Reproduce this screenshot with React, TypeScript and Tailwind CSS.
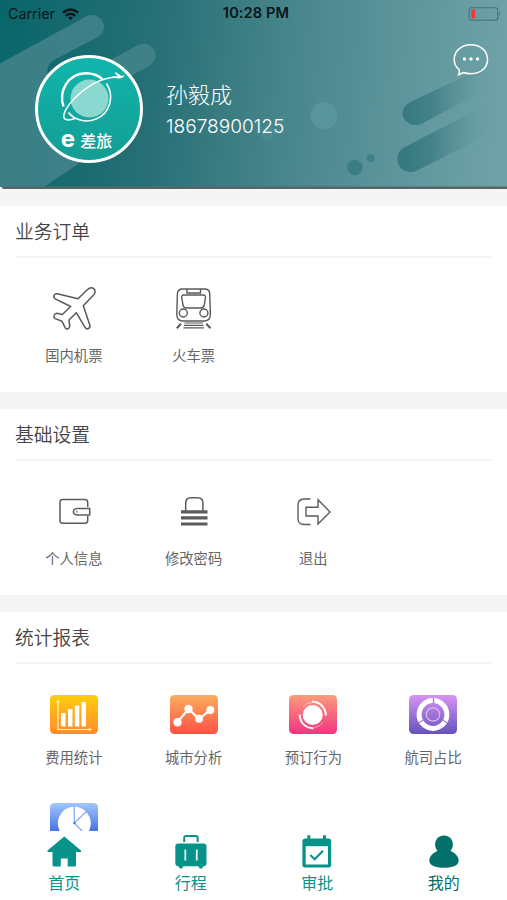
import type { ReactNode } from 'react'

type MenuItem = {
  label: string
  icon: ReactNode
}

type MenuSectionProps = {
  title: string
  items: MenuItem[]
  compact?: boolean
}

function PlaneIcon() {
  return (
    <svg width="48" height="48" viewBox="0 0 48 48" fill="none" stroke="#595959" strokeWidth="1.5" strokeLinejoin="round">
      <path d="M37.3 5.8C39.5 3.8 42.3 3.5 43.8 4.7C45.6 6.2 45.4 8.8 43.8 10.7L33.3 21.7L39.9 41.2C40.6 44.4 37 46 35.3 43.8L26.3 28.7L19 36L19.7 41.7C19.8 45 16.6 46 15.300 43.800L12 37.300L5.200 34.600C2.800 33.200 4 29.800 6.700 29.300L12.300 30.500L20.700 22.500L5.200 14.800C2.600 13.100 4 9.300 7.300 9.700L28 14.800Z" />
    </svg>
  )
}

function TrainIcon() {
  return (
    <svg width="48" height="48" viewBox="0 0 48 48" fill="none" stroke="#595959" strokeWidth="1.4">
      <path d="M12.5 5H34.500Q39.500 5 39.700 9.500L40.400 30Q40.400 36.700 34.500 37H12.500Q6.600 36.700 6.800 30L7.400 9.500Q7.800 5 12.500 5Z" />
      <path d="M17 5V9H30.500V5" />
      <path d="M14 11H33.200Q35.700 11 35.500 13.500L34.200 21.200Q33.700 23.900 30.800 24H16.500Q13.500 23.900 13 21.200L11.700 13.500Q11.500 11 14 11Z" />
      <circle cx="13.300" cy="29" r="4" />
      <circle cx="33.900" cy="29" r="4" />
      <path d="M14.500 39H33M14 41.400H33.500M13.500 43.800H34" strokeWidth="1.2" />
      <path d="M11 39.800L6.800 44.200M36.300 39.800L40.500 44.200" strokeWidth="2" />
    </svg>
  )
}

function WalletIcon() {
  return (
    <svg width="48" height="48" viewBox="0 0 48 48" fill="none" stroke="#5c5c5c" strokeWidth="1.5">
      <path d="M37.700 20V15.200Q37.700 12.400 35 12.400H12.700Q10 12.400 10 15.200V33.500Q10 36.300 12.700 36.300H35Q37.700 36.300 37.700 33.500V29" />
      <path d="M27 21.600H39.700V27.900H27Q23.400 27.700 23.400 24.700Q23.400 21.800 27 21.600Z" />
      <circle cx="26.800" cy="24.700" r="0.600" strokeWidth="0.800" />
    </svg>
  )
}

function LockIcon() {
  return (
    <svg width="48" height="48" viewBox="0 0 48 48" fill="none" stroke="#5c5c5c">
      <path d="M15.700 24V16.200Q15.700 10.700 20.700 10.700H27.700Q32.900 10.700 32.900 16.200V24" strokeWidth="1.500" />
      <path d="M11 24.800H37.500M11 30.800H37.500M11 37H37.500" strokeWidth="3.200" />
    </svg>
  )
}

function LogoutIcon() {
  return (
    <svg width="48" height="48" viewBox="0 0 48 48" fill="none" stroke="#5c5c5c" strokeWidth="1.400">
      <path d="M21.500 12H15Q9 12.300 9 18V31.500Q9 37.300 15 37.500H21.500" />
      <path d="M17 20.300H29V12.800L41 25L29 37V29H17Z" />
    </svg>
  )
}

function CostIcon() {
  return (
    <svg width="48" height="39" viewBox="0 0 48 39">
      <defs>
        <linearGradient id="cost" x1="0" y1="0" x2="0" y2="1">
          <stop stopColor="#fdcd0d" />
          <stop offset="1" stopColor="#fd8c2f" />
        </linearGradient>
      </defs>
      <rect width="48" height="39" rx="4.500" fill="url(#cost)" />
      <path d="M8 6V34.500H40" fill="none" stroke="#fff2c4" strokeWidth="1.200" />
      <path d="M6.200 7.500L8 4.500L9.800 7.500ZM39 32.700L42.200 34.500L39 36.300Z" fill="#fff2c4" />
      <path d="M11 18h4.500v13.500H11zM18 14h4.500v17.500H18zM24.800 10.500h4.500v21h-4.500zM31.500 7h4.500v24.500h-4.500z" fill="#fff" />
    </svg>
  )
}

function CityIcon() {
  return (
    <svg width="48" height="39" viewBox="0 0 48 39">
      <defs>
        <linearGradient id="city" x1="0" y1="0" x2="0" y2="1">
          <stop stopColor="#fcae5e" />
          <stop offset="1" stopColor="#fd5144" />
        </linearGradient>
      </defs>
      <rect width="48" height="39" rx="4.500" fill="url(#city)" />
      <path d="M7.500 27L18.500 14L29 23.800L40.500 15" fill="none" stroke="#fff" strokeWidth="2.200" />
      <g fill="#fff">
        <circle cx="7.500" cy="27.300" r="4.200" />
        <circle cx="18.500" cy="14" r="4.200" />
        <circle cx="29" cy="23.800" r="4" />
        <circle cx="40.300" cy="15" r="4" />
      </g>
    </svg>
  )
}

function BookingIcon() {
  return (
    <svg width="48" height="39" viewBox="0 0 48 39">
      <defs>
        <linearGradient id="booking" x1="0" y1="0" x2="0" y2="1">
          <stop stopColor="#fb9b7c" />
          <stop offset="1" stopColor="#f23480" />
        </linearGradient>
      </defs>
      <rect width="48" height="39" rx="4.500" fill="url(#booking)" />
      <circle cx="23.700" cy="20" r="10" fill="#fff" />
      <g fill="none" stroke="#fff">
        <path d="M23 6.800A13.200 13.200 0 0 1 36.700 20.500" strokeWidth="1.900" />
        <path d="M24.500 33.200A13.200 13.200 0 0 1 10.700 19.500" strokeWidth="1.900" />
        <path d="M14 11.500A12.500 12.500 0 0 1 23 7.500M33.500 28A12.500 12.500 0 0 1 25 32.500" strokeWidth="0.700" opacity="0.700" />
      </g>
    </svg>
  )
}

function AirlineIcon() {
  return (
    <svg width="48" height="39" viewBox="0 0 48 39">
      <defs>
        <linearGradient id="airline" x1="0" y1="0" x2="0" y2="1">
          <stop stopColor="#d794f3" />
          <stop offset="1" stopColor="#6652bd" />
        </linearGradient>
      </defs>
      <rect width="48" height="39" rx="4.500" fill="url(#airline)" />
      <circle cx="24" cy="19.500" r="13.900" fill="none" stroke="#fff" strokeWidth="5" />
      <path d="M24.500 8.500V3M14.500 25L9.500 28M33.500 25L38.500 28" stroke="#a678dc" strokeWidth="1.300" />
      <circle cx="24" cy="19.500" r="6.700" fill="none" stroke="#dcb8f5" strokeWidth="1.200" />
    </svg>
  )
}

function PieIcon() {
  return (
    <svg width="48" height="39" viewBox="0 0 48 39">
      <defs>
        <linearGradient id="pie" x1="0" y1="0" x2="0" y2="1">
          <stop stopColor="#a3c6fb" />
          <stop offset="0.700" stopColor="#4976e3" />
          <stop offset="1" stopColor="#355ed8" />
        </linearGradient>
      </defs>
      <rect width="48" height="39" rx="4.500" fill="url(#pie)" />
      <circle cx="24.300" cy="20.300" r="16.500" fill="#fff" />
      <path d="M24.300 3.500V20L36.500 8.500M24.300 20L37 33" fill="none" stroke="#8eaef1" strokeWidth="1.300" />
      <circle cx="24.500" cy="20" r="1.200" fill="#4976e3" />
    </svg>
  )
}

const orderItems: MenuItem[] = [
  { label: '国内机票', icon: <PlaneIcon /> },
  { label: '火车票', icon: <TrainIcon /> },
]

const settingItems: MenuItem[] = [
  { label: '个人信息', icon: <WalletIcon /> },
  { label: '修改密码', icon: <LockIcon /> },
  { label: '退出', icon: <LogoutIcon /> },
]

const reportItems: MenuItem[] = [
  { label: '费用统计', icon: <CostIcon /> },
  { label: '城市分析', icon: <CityIcon /> },
  { label: '预订行为', icon: <BookingIcon /> },
  { label: '航司占比', icon: <AirlineIcon /> },
  { label: '', icon: <PieIcon /> },
]

const tabs = [
  {
    label: '首页',
    color: 'text-[#07938a]',
    icon: (
      <path d="M17.300 2.500L34 16.500Q34.500 18 33.200 18H29V31Q29 32.500 27.500 32.500H20.700V24.500H13.800V32.500H7Q5.500 32.500 5.500 31V18H1.200Q0 18 0.500 16.500Z" />
    ),
  },
  {
    label: '行程',
    color: 'text-[#07938a]',
    icon: (
      <>
        <path d="M10.200 8V3.800Q10.200 1.900 12.200 1.900H21.700Q23.700 1.900 23.700 3.800V8" fill="none" stroke="currentColor" strokeWidth="2" />
        <path d="M4.500 9.500H29.300Q32.500 9.500 32.500 12.700V29Q32.500 32.200 29.500 32.200L28 34.500H25.800L24.300 32.300H9.500L8 34.500H5.800L4.300 32.200Q1.300 32 1.300 29V12.700Q1.300 9.500 4.500 9.500Z" />
        <path d="M11.300 15.500V26.500M22.800 15.500V26.500" stroke="#e3f3f1" strokeWidth="1.800" />
      </>
    ),
  },
  {
    label: '审批',
    color: 'text-[#07938a]',
    icon: (
      <>
        <path d="M5.500 4.500H7.300V1.300H10.300V4.500H23V1.300H26V4.500H28.500Q31.200 4.500 31.200 7.200V30.700Q31.200 33.500 28.500 33.500H5.200Q2.400 33.500 2.400 30.700V7.200Q2.400 4.500 5.500 4.500Z" />
        <path d="M5.700 12.200H28V30.500H5.700Z" fill="#fff" />
        <path d="M10.300 21L14.700 25.300L23 16.700" fill="none" stroke="currentColor" strokeWidth="2" />
      </>
    ),
  },
  {
    label: '我的',
    color: 'text-[#04706a]',
    icon: (
      <path d="M17 1.500C22.200 1.500 25.900 5.400 25.900 10.500C25.900 13 25 15.200 23.500 17C28.200 18.800 31.700 22.500 31.700 26.700C31.700 31.200 26 33.700 17 33.700C8.200 33.700 2.300 31.200 2.300 26.700C2.300 22.500 5.900 18.800 10.500 17C9 15.200 8.100 13 8.100 10.500C8.100 5.400 11.700 1.500 17 1.500Z" />
    ),
  },
]

function HeaderArt() {
  return (
    <svg className="absolute inset-0" width="507" height="189" viewBox="0 0 507 189">
      <defs>
        <linearGradient id="sky" gradientUnits="userSpaceOnUse" x1="0" y1="30" x2="507" y2="70">
          <stop stopColor="#08666a" />
          <stop offset="0.300" stopColor="#266f76" />
          <stop offset="0.550" stopColor="#458489" />
          <stop offset="0.800" stopColor="#5e959c" />
          <stop offset="1" stopColor="#6ea2a8" />
        </linearGradient>
        <linearGradient id="streak" gradientUnits="userSpaceOnUse" x1="404" y1="0" x2="496" y2="0">
          <stop stopColor="#36797f" />
          <stop offset="0.300" stopColor="#407f86" stopOpacity="0.900" />
          <stop offset="1" stopColor="#6a9fa5" stopOpacity="0" />
        </linearGradient>
      </defs>
      <rect width="507" height="187" fill="url(#sky)" />
      <path
        d="M0 63.500L86 16.500C94 12 104 18 104 26.500C104 31.500 101.500 35 97 37.500L55 59.500C49 63 47 67 47.500 73L70 82L137 45.500C145 40.500 155.500 46.500 155.500 55C155.500 60 153 64 148 66.500L122 81L78 164L44 187H0Z"
        fill="#41838a"
        opacity="0.900"
      />
      <path d="M410.500 102L465 76L507 56V79L422 123.500C414 128 403 123 402.500 113.500C402.500 108.500 405.500 104.500 410.500 102Z" fill="url(#streak)" />
      <path d="M404 147.500L507 94V125L417 170.500C408 175 397 169 397.500 159C397.500 154 400 150 404 147.500Z" fill="url(#streak)" />
      <circle cx="355" cy="167.500" r="7.800" fill="#3b7f86" />
      <circle cx="370.700" cy="158" r="4" fill="#3f8289" />
      <circle cx="324" cy="115.500" r="13.500" fill="#59959c" />
      <circle cx="268" cy="133" r="7" fill="#4a8a91" />
      <circle cx="282" cy="119" r="4" fill="#4a8a91" />
      <path d="M1 186.500H507V189H3Z" fill="#596668" />
    </svg>
  )
}

function Avatar() {
  return (
    <div className="relative flex h-[108px] w-[108px] items-end justify-center rounded-full border-[3px] border-white bg-linear-to-b from-[#10b5ac] to-[#149d94] pr-[5px] pb-[10px] text-white">
      <svg className="absolute top-[-3px] left-[-3px]" width="108" height="108" viewBox="0 0 108 108" fill="none" stroke="#fff">
        <circle cx="54.500" cy="43.500" r="19" fill="#8bd8d1" stroke="none" />
        <path d="M28.500 51.500C23.500 37 32 18.500 51 18.200C58 18.200 63.500 20.500 67.500 24.200" strokeWidth="2.400" />
        <path d="M71.500 28.500C79.500 41 75.500 58 61 64C50 68.500 39 64.500 33.500 57.500" strokeWidth="1.600" />
        <path d="M82 22C66 22.500 50.500 32 38.500 44.500C30.500 53 26 62.500 30.500 64.300C32.500 65.200 36 65 40 63.500" strokeWidth="1.500" />
        <path d="M77 21.500L83 21.800L79.500 17.500H81.300L86.500 21L89.500 20.300Q88.500 23.500 83 23.500L79 22.700Z" fill="#fff" stroke="none" />
      </svg>
      <span className="mr-[5px] font-['Inter',sans-serif] text-[24px] leading-[23px] font-bold">e</span>
      <span className="text-[16px] leading-[20px] font-medium">差旅</span>
    </div>
  )
}

function StatusBar() {
  return (
    <div className="relative grid h-7 grid-cols-3 items-center pr-[6px] pl-2 font-['Inter',sans-serif] text-[14.3px] text-[#07161a]">
      <div className="flex items-center gap-[7px]">
        <span>Carrier</span>
        <svg width="17" height="13" viewBox="0 0 18 13" fill="none" stroke="currentColor" strokeWidth="2.500">
          <path d="M1 4.500Q9-2 17 4.500M4 7.800Q9 3.700 14 7.800" />
          <path d="M6.300 9.800Q9 7.800 11.700 9.800L9 12.700Z" fill="currentColor" stroke="none" />
        </svg>
      </div>
      <span className="pl-[3px] text-center text-[14.6px] font-semibold tracking-[0.1px]">10:28 PM</span>
      <svg className="justify-self-end" width="33" height="14" viewBox="0 0 33 14">
        <rect x="1.200" y="0.700" width="28.600" height="12.600" rx="2.500" fill="none" stroke="#46707a" strokeWidth="1.100" />
        <rect x="3.300" y="2.500" width="3.900" height="9" rx="1" fill="#f2383c" />
        <path d="M31 5Q33 7 31 9Z" fill="#3f686e" />
      </svg>
    </div>
  )
}

function MenuSection({ title, items, compact }: MenuSectionProps) {
  return (
    <section className="min-h-[186px] shrink-0 bg-white px-[14px]">
      <h2 className="mx-px h-[52px] border-b-2 border-[#f4f4f4] text-[18.8px] leading-[49px] font-[350] text-[#444]">{title}</h2>
      <div className="grid grid-cols-4 pt-[26px]">
        {items.map((item, index) => (
          <div key={index} className="flex h-[108px] flex-col items-center">
            <div className="flex h-[48px] items-center">{item.icon}</div>
            <span className={`${compact ? 'mt-[9px]' : 'mt-[13px]'} text-[14.3px] leading-5 text-[#666]`}>{item.label}</span>
          </div>
        ))}
      </div>
    </section>
  )
}

function App() {
  return (
    <div className="flex h-[900px] w-[507px] flex-col overflow-hidden bg-white font-['Noto_Sans_CJK_SC',sans-serif]">
      <header className="relative z-10 h-[188px] shrink-0">
        <HeaderArt />
        <StatusBar />
        <div className="relative flex pt-[27px] pl-[35px]">
          <Avatar />
          <div className="ml-[23px] pt-[22px] text-white">
            <p className="text-[22px] leading-8 font-light">孙毅成</p>
            <p className="font-['Inter',sans-serif] text-[19.1px] leading-[34px] font-light">18678900125</p>
          </div>
          <svg className="mt-[-12px] mr-[18px] ml-auto" width="36" height="34" viewBox="0 0 36 34" fill="none" stroke="#fff" strokeWidth="1.500">
            <path d="M6 26.500C3 24 1.200 20.500 1.200 16.500C1.200 8 8.500 1.700 18 1.700C27.500 1.700 34.500 8 34.500 16.500C34.500 25 27.500 30.700 18 30.700C15 30.700 12.500 30.300 10.500 29.500L5.700 31.800Q6.800 29 6 26.500Z" />
            <g fill="#fff" stroke="none">
              <circle cx="11.500" cy="16" r="1.700" />
              <circle cx="18" cy="16" r="1.700" />
              <circle cx="24.500" cy="16" r="1.700" />
            </g>
          </svg>
        </div>
      </header>

      <main className="flex min-h-0 flex-1 flex-col gap-[17px] overflow-hidden bg-[#f5f5f5] pt-[18px]">
        <MenuSection title="业务订单" items={orderItems} />
        <MenuSection title="基础设置" items={settingItems} />
        <MenuSection title="统计报表" items={reportItems} compact />
      </main>

      <nav className="grid h-[69px] shrink-0 grid-cols-4 bg-white pl-px">
        {tabs.map((tab) => (
          <button key={tab.label} type="button" className={`flex flex-col items-center pt-[3px] ${tab.color}`}>
            <svg width="34" height="35" viewBox="0 0 34 35" fill="currentColor">
              {tab.icon}
            </svg>
            <span className="mt-px text-[16px] leading-6">{tab.label}</span>
          </button>
        ))}
      </nav>
    </div>
  )
}

export default App
